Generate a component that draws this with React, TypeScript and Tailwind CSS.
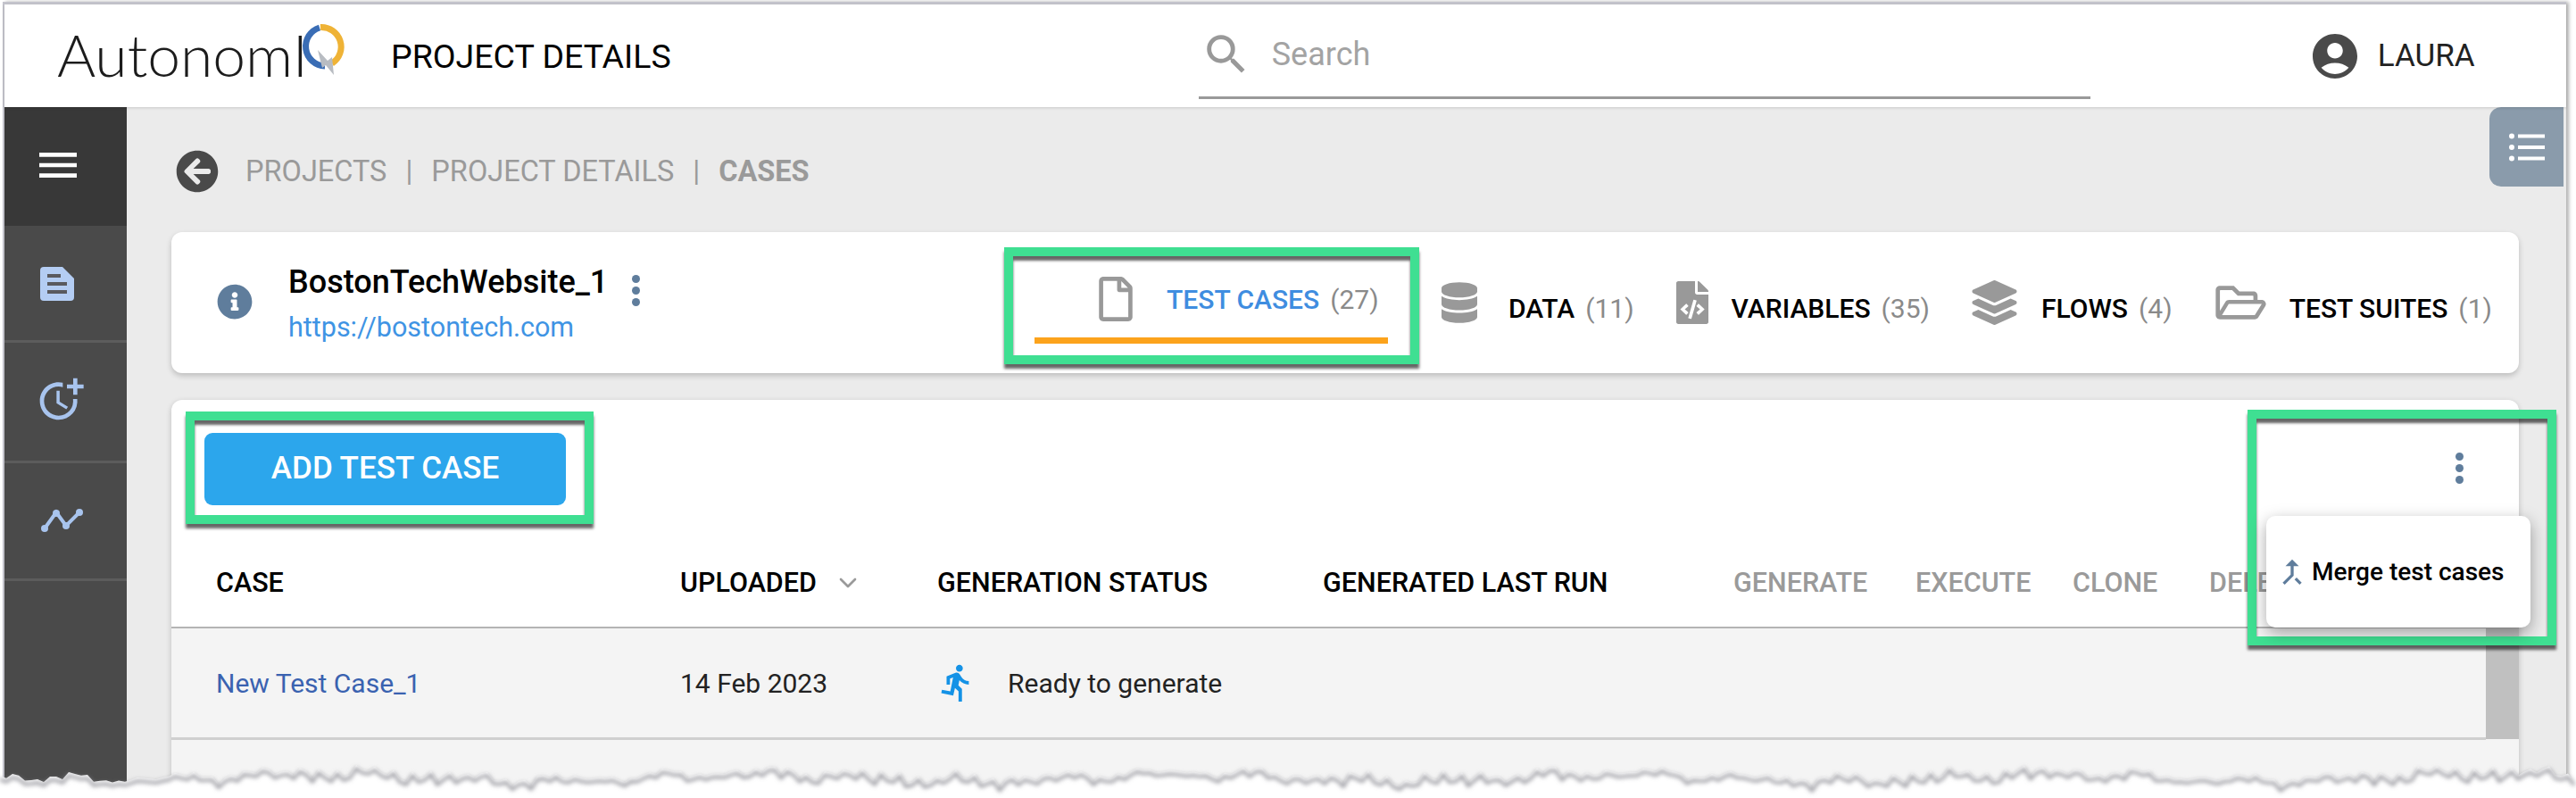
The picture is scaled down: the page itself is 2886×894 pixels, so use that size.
import { ReactNode } from 'react';
import { ChevronDown } from 'lucide-react';
import {
  FaArrowCircleLeft,
  FaDatabase,
  FaFileCode,
  FaInfoCircle,
  FaLayerGroup,
  FaRegFile,
  FaRegFolderOpen,
} from 'react-icons/fa';
import { MdAccountCircle, MdCallMerge, MdDirectionsRun, MdMenu, MdMoreTime, MdSearch } from 'react-icons/md';

const tornPoints = (() => {
  const pts: string[] = [];
  for (let x = 0; x <= 2886; x += 7) {
    const y =
      19 +
      Math.sin(x * 0.013) * 4 +
      Math.sin(x * 0.057) * 3 +
      Math.sin(x * 0.31) * 3 +
      Math.sin(x * 1.7) * 2 +
      (x % 21 === 0 ? -3 : 0) +
      (x % 35 === 0 ? 3 : 0);
    pts.push(`${x},${y.toFixed(1)}`);
  }
  return pts;
})();

function Kebab() {
  return (
    <div className="flex flex-col gap-[4px]">
      <div className="w-[9px] h-[9px] rounded-full bg-[#5f7d9c]" />
      <div className="w-[9px] h-[9px] rounded-full bg-[#5f7d9c]" />
      <div className="w-[9px] h-[9px] rounded-full bg-[#5f7d9c]" />
    </div>
  );
}

function Highlight({ className }: { className: string }) {
  return (
    <div
      className={`absolute border-[10px] border-[#3fdf92] shadow-[0_5px_3px_rgba(0,0,0,0.6),inset_0_5px_3px_rgba(0,0,0,0.6)] pointer-events-none ${className}`}
    />
  );
}

function Tab({ icon, label, count, className }: { icon: ReactNode; label: string; count: number; className: string }) {
  return (
    <div className={`flex items-center mt-[54px] h-[50px] flex-none ${className}`}>
      {icon}
      <span className="mt-[12px] text-[30px] font-medium text-black whitespace-nowrap">{label}</span>
      <span className="mt-[12px] ml-[12px] text-[30px] text-[#8a8a8a] whitespace-nowrap">({count})</span>
    </div>
  );
}

function Logo() {
  return (
    <div className="relative flex items-center w-[340px] h-[70px]">
      <span className="font-['Lato'] text-[66px] font-light leading-none text-[#1c1c1c] whitespace-nowrap">AutonomI</span>
      <svg className="absolute left-[270px] top-[0px]" width="60" height="70" viewBox="0 0 60 70">
        <path d="M24 5 A22 22 0 0 0 30 48" fill="none" stroke="#3a6db5" strokeWidth="7" />
        <path d="M25 4.500 A22 22 0 0 1 38 45" fill="none" stroke="#efb336" strokeWidth="7" />
        <path d="M22 30 L33 42 L38 38 L40 58 L31 47 L27 50 Z" fill="#b8bcc2" />
      </svg>
    </div>
  );
}

const headers = [
  { label: 'CASE', width: 'w-[520px]', muted: false },
  { label: 'UPLOADED', width: 'w-[288px]', muted: false, sort: true },
  { label: 'GENERATION STATUS', width: 'w-[432px]', muted: false },
  { label: 'GENERATED LAST RUN', width: 'w-[460px]', muted: false },
  { label: 'GENERATE', width: 'w-[204px]', muted: true },
  { label: 'EXECUTE', width: 'w-[176px]', muted: true },
  { label: 'CLONE', width: 'w-[153px]', muted: true },
  { label: 'DELETE', width: 'w-[120px]', muted: true },
];

export default function App() {
  return (
    <div className="relative w-[2886px] h-[894px] bg-white overflow-hidden font-['Roboto',sans-serif]">
      <div className="ml-[3px] mt-[2px] w-[2872px] h-[892px] border-t-[3px] border-l-[2px] border-[#c4c4cc] shadow-[3px_0_4px_rgba(0,0,0,0.3)] flex flex-col">
        {/* Top bar */}
        <header className="relative z-10 flex items-center h-[115px] flex-none bg-white shadow-[0_1px_3px_rgba(0,0,0,0.15)]">
          <div className="ml-[59px] mt-[-4px]">
            <Logo />
          </div>
          <span className="ml-[34px] mt-[2px] text-[37.5px] text-black whitespace-nowrap">PROJECT DETAILS</span>
          <div className="ml-[591px] w-[999px] h-[106px] self-start border-b-[3px] border-[#999] flex items-center gap-[22px] pl-[2px] pt-[8px]">
            <MdSearch className="w-[58px] h-[58px] text-[#999]" />
            <span className="text-[36px] text-[#a3a3a3]">Search</span>
          </div>
          <MdAccountCircle className="ml-[244px] mt-[1px] w-[60px] h-[60px] text-[#4a4a4a]" />
          <span className="ml-[18px] mt-[1px] text-[35px] text-[#222]">LAURA</span>
        </header>

        <div className="relative flex flex-1 min-h-0">
          {/* Sidebar */}
          <aside className="w-[137px] flex-none bg-[#4a4a4a] flex flex-col">
            <div className="h-[133px] bg-[#383838] flex items-start justify-center pt-[37px] pr-[18px]">
              <MdMenu className="w-[56px] h-[56px] text-white" />
            </div>
            <div className="h-[131px] border-b-[3px] border-[#5c5c5c] flex items-start pl-[40px] pt-[46px]">
              <svg width="38" height="38" viewBox="0 0 38 38">
                <path d="M4 0 H25 L38 13 V34 A4 4 0 0 1 34 38 H4 A4 4 0 0 1 0 34 V4 A4 4 0 0 1 4 0 Z" fill="#b4cdf3" />
                <rect x="8" y="8" width="15" height="4" fill="#5a5a5e" />
                <rect x="8" y="17" width="22" height="4" fill="#5a5a5e" />
                <rect x="8" y="26" width="22" height="4" fill="#5a5a5e" />
              </svg>
            </div>
            <div className="h-[135px] border-b-[3px] border-[#5c5c5c] flex items-start pl-[35px] pt-[35px]">
              <MdMoreTime className="w-[56px] h-[56px] text-[#a8c4ee]" />
            </div>
            <div className="h-[132px] border-b-[3px] border-[#5c5c5c] flex items-start pl-[41px] pt-[50px]">
              <svg width="48" height="28" viewBox="0 0 48 28" fill="none">
                <path d="M4 23 L17 5 L28 20 L43 5" stroke="#a8c4ee" strokeWidth="4" />
                <circle cx="4" cy="23" r="4" fill="#a8c4ee" />
                <circle cx="17" cy="6" r="4" fill="#a8c4ee" />
                <circle cx="28" cy="20" r="4" fill="#a8c4ee" />
                <circle cx="43" cy="5" r="4" fill="#a8c4ee" />
              </svg>
            </div>
          </aside>

          {/* Main */}
          <main className="flex-1 min-w-0 bg-[#ebebeb] pl-[50px] pr-[53px] pt-[48px]">
            <div className="flex items-center h-[48px] text-[32.5px] text-[#9a9a9a] whitespace-nowrap">
              <FaArrowCircleLeft className="w-[48px] h-[48px] text-[#4a4a4a] ml-[5px]" />
              <span className="ml-[30px]">PROJECTS</span>
              <span className="ml-[21px]">|</span>
              <span className="ml-[21px]">PROJECT DETAILS</span>
              <span className="ml-[21px]">|</span>
              <span className="ml-[21px] font-bold">CASES</span>
            </div>

            {/* Project card */}
            <section className="mt-[44px] h-[158px] bg-white rounded-[12px] shadow-[0_3px_6px_rgba(0,0,0,0.2)] flex items-start">
              <FaInfoCircle className="ml-[51px] mt-[58px] w-[40px] h-[40px] text-[#5f7d9c] flex-none" />
              <div className="ml-[40px] w-[389px] flex-none">
                <div className="flex items-center mt-[36px] h-[40px]">
                  <span className="text-[36px] font-medium text-black whitespace-nowrap">BostonTechWebsite_1</span>
                  <div className="ml-[27px] mt-[18px]">
                    <Kebab />
                  </div>
                </div>
                <a className="block mt-[8px] text-[30.5px] text-[#3f94e4] whitespace-nowrap">https://bostontech.com</a>
              </div>
              <div className="relative ml-[447px] w-[396px] flex-none">
                <Highlight className="left-[-34px] top-[17px] w-[465px] h-[131px]" />
                <div className="mt-[50px] h-[50px] flex items-center pl-[72px]">
                  <FaRegFile className="w-[38px] h-[50px] text-[#999]" />
                  <span className="ml-[38px] text-[30px] font-medium text-[#3f8de0] whitespace-nowrap">TEST CASES</span>
                  <span className="ml-[12px] text-[30px] text-[#8a8a8a] whitespace-nowrap">(27)</span>
                </div>
                <div className="mt-[18px] h-[7px] bg-[#fca31c]" />
              </div>
              <Tab
                className="ml-[60px]"
                icon={<FaDatabase className="w-[40px] h-[46px] text-[#999] mr-[35px]" />}
                label="DATA"
                count={11}
              />
              <Tab
                className="ml-[47px]"
                icon={<FaFileCode className="w-[36px] h-[50px] text-[#999] mr-[26px]" />}
                label="VARIABLES"
                count={35}
              />
              <Tab
                className="ml-[47px]"
                icon={<FaLayerGroup className="w-[51px] h-[50px] text-[#999] mr-[27px]" />}
                label="FLOWS"
                count={4}
              />
              <Tab
                className="ml-[48px]"
                icon={<FaRegFolderOpen className="w-[57px] h-[50px] text-[#999] mr-[26px]" />}
                label="TEST SUITES"
                count={1}
              />
            </section>

            {/* Cases card */}
            <section className="relative mt-[30px] bg-white rounded-t-[12px] shadow-[0_2px_6px_rgba(0,0,0,0.2)]">
              <Highlight className="left-[16px] top-[13px] w-[457px] h-[126px]" />
              <div className="h-[156px] flex items-start justify-between">
                <button className="ml-[37px] mt-[37px] w-[405px] h-[81px] rounded-[9px] bg-[#2ca6ec] text-white text-[35px] font-medium">
                  ADD TEST CASE
                </button>
                <div className="mr-[62px] mt-[59px]">
                  <Kebab />
                </div>
              </div>

              <div className="flex items-center h-[100px] pl-[50px] border-b-2 border-[#b4b4b4] overflow-hidden whitespace-nowrap">
                {headers.map((h) => (
                  <div key={h.label} className={`flex items-center flex-none font-medium text-[30.5px] ${h.width} ${h.muted ? 'text-[#9a9a9a]' : 'text-black'}`}>
                    {h.label}
                    {h.sort && <ChevronDown className="ml-[19px] w-[32px] h-[32px] text-[#9a9a9a]" />}
                  </div>
                ))}
              </div>

              <div className="flex">
                <div className="flex-1 min-w-0 bg-[#f4f4f4]">
                  <div className="flex items-center h-[125px] pl-[50px] border-b-[3px] border-[#cfcfcf] text-[30px] whitespace-nowrap">
                    <span className="w-[520px] flex-none text-[#3a62b0]">New Test Case_1</span>
                    <span className="w-[288px] flex-none text-[#222]">14 Feb 2023</span>
                    <MdDirectionsRun className="w-[46px] h-[46px] text-[#1492e6] ml-[-1px]" />
                    <span className="ml-[34px] text-[#222]">Ready to generate</span>
                  </div>
                  <div className="h-[80px]" />
                </div>
                <div className="w-[37px] flex-none bg-[#f4f4f4]">
                  <div className="h-[124px] bg-[#c0c0c0]" />
                </div>
              </div>

              <Highlight className="right-[-42px] top-[11px] w-[346px] h-[264px]" />
              {/* Overflow menu */}
              <div className="absolute right-[-13px] top-[130px] w-[296px] h-[125px] bg-white rounded-[10px] shadow-[0_6px_18px_rgba(0,0,0,0.35)] flex items-center pl-[9px] gap-[2px]">
                <MdCallMerge className="w-[40px] h-[40px] text-[#5f7d9c]" />
                <span className="text-[28px] font-medium text-black whitespace-nowrap">Merge test cases</span>
              </div>
            </section>
          </main>

          {/* Side list tab */}
          <div className="absolute right-[3px] top-0 w-[83px] h-[89px] bg-[#8a9bab] rounded-l-[13px] flex items-center justify-center">
            <svg width="40" height="32" viewBox="0 0 40 32" fill="#ffffff">
              <circle cx="3" cy="3.500" r="3" />
              <rect x="10" y="1.500" width="30" height="4" />
              <circle cx="3" cy="16" r="3" />
              <rect x="10" y="14" width="30" height="4" />
              <circle cx="3" cy="28.500" r="3" />
              <rect x="10" y="26.500" width="30" height="4" />
            </svg>
          </div>
        </div>
      </div>

      {/* Torn paper edge */}
      <svg className="absolute left-0 bottom-0" width="2886" height="44" viewBox="0 0 2886 44">
        <defs>
          <filter id="tornBlur" x="-1%" y="-50%" width="102%" height="200%">
            <feGaussianBlur stdDeviation="2.5" />
          </filter>
        </defs>
        <polygon points={`0,44 ${tornPoints.join(' ')} 2886,44`} fill="#ffffff" />
        <polyline points={tornPoints.join(' ')} transform="translate(0 4)" fill="none" stroke="#8a8a92" strokeWidth="3" filter="url(#tornBlur)" />
      </svg>
    </div>
  );
}
